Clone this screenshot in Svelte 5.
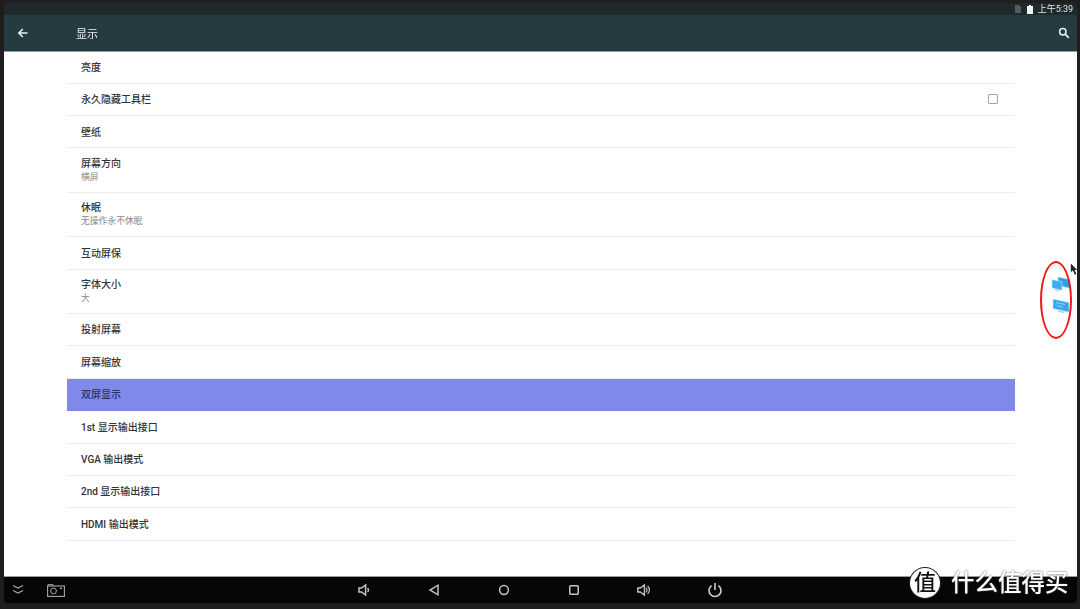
<script lang="ts">
  type Row = { title: string; sub?: string; check?: boolean; active?: boolean };
  const rows: Row[] = [
    { title: '亮度' },
    { title: '永久隐藏工具栏', check: true },
    { title: '壁纸' },
    { title: '屏幕方向', sub: '横屏' },
    { title: '休眠', sub: '无操作永不休眠' },
    { title: '互动屏保' },
    { title: '字体大小', sub: '大' },
    { title: '投射屏幕' },
    { title: '屏幕缩放' },
    { title: '双屏显示', active: true },
    { title: '1st 显示输出接口' },
    { title: 'VGA 输出模式' },
    { title: '2nd 显示输出接口' },
    { title: 'HDMI 输出模式' }
  ];
</script>

<div class="frame">
  <div class="screen">
    <div class="status">
      <svg class="sim" viewBox="0 0 6 8"><path d="M0 0h4l2 2v6H0z" fill="#555c5e" /></svg>
      <svg class="battery" viewBox="0 0 6 9"><path d="M2 0h2v1h2v8H0V1h2z" fill="#f2f4f4" /></svg>
      <span class="clock">上午5:39</span>
    </div>

    <header class="toolbar">
      <svg class="back" viewBox="0 0 12 12"><path d="M10.5 6H2M5.8 2 1.8 6l4 4" fill="none" stroke="#e8eded" stroke-width="1.6" /></svg>
      <span class="title">显示</span>
      <svg class="search" viewBox="0 0 12 12"><circle cx="4.8" cy="4.8" r="3.2" fill="none" stroke="#e8eded" stroke-width="1.5" /><path d="m7.2 7.2 3.6 3.6" stroke="#e8eded" stroke-width="1.7" /></svg>
    </header>

    <main class="content">
      <ul class="list">
        {#each rows as row}
          <li class="row" class:two={row.sub} class:active={row.active}>
            <div class="texts">
              <span class="name">{row.title}</span>
              {#if row.sub}<span class="sub">{row.sub}</span>{/if}
            </div>
            {#if row.check}<span class="box"></span>{/if}
          </li>
        {/each}
      </ul>
    </main>

    <nav class="navbar">
      <div class="nav-left">
        <svg class="ic chev" viewBox="0 0 14 12"><path d="m2 1.5 5 2.5 5-2.5M2 6.5 7 9l5-2.5" fill="none" stroke="#a5a5a5" stroke-width="1.3" /></svg>
        <svg class="ic cam" viewBox="0 0 18 13"><rect x=".6" y="2" width="16.8" height="10.4" fill="none" stroke="#a8a8a8" stroke-width="1.1" /><path d="M1 2V.7h5V2" fill="none" stroke="#a8a8a8" /><circle cx="6.5" cy="7" r="2.9" fill="none" stroke="#a8a8a8" /><rect x="13" y="3.6" width="2" height="1.4" fill="#a8a8a8" /></svg>
      </div>
      <div class="nav-mid">
        <svg class="ic" viewBox="0 0 14 14"><path d="M2 5h2.6l4-3v10l-4-3H2z" fill="none" stroke="#c4c4c4" stroke-width="1.5" /><path d="M10.6 5a3 3 0 0 1 0 4" fill="none" stroke="#c4c4c4" stroke-width="1.3" /></svg>
        <svg class="ic" viewBox="0 0 14 14"><path d="M11 2.2v9.6L3 7z" fill="none" stroke="#c4c4c4" stroke-width="1.5" /></svg>
        <svg class="ic" viewBox="0 0 14 14"><circle cx="7" cy="7" r="4.4" fill="none" stroke="#c4c4c4" stroke-width="1.5" /></svg>
        <svg class="ic" viewBox="0 0 14 14"><rect x="2.8" y="2.8" width="8.4" height="8.4" rx=".8" fill="none" stroke="#c4c4c4" stroke-width="1.5" /></svg>
        <svg class="ic" viewBox="0 0 14 14"><path d="M.8 5h2.6l4-3v10l-4-3H.8z" fill="none" stroke="#c4c4c4" stroke-width="1.4" /><path d="M9 4.8a3 3 0 0 1 0 4.4M10.6 3a5.4 5.4 0 0 1 0 8" fill="none" stroke="#c4c4c4" stroke-width="1.2" /></svg>
        <svg class="ic power" viewBox="0 0 16 16"><path d="M8 1v7" stroke="#cfcfcf" stroke-width="1.6" /><path d="M4.6 3.6a6 6 0 1 0 6.8 0" fill="none" stroke="#cfcfcf" stroke-width="1.6" /></svg>
      </div>
    </nav>
  </div>

  <!-- things drawn over the screenshot -->
  <svg class="monitors" viewBox="0 0 22 40">
    <path d="m8 1 12 2.6v8.6L8 9.6z" fill="#2f9fe8" stroke="#bfe4fa" stroke-width=".6" />
    <path d="m2 3.5 10 2.3v8.6L2 12z" fill="#3aaef2" stroke="#cfeafb" stroke-width=".6" />
    <path d="m5 13 4 1v1.4l-4-1z" fill="#c3cdd3" />
    <path d="m3 23 16 3.6v9.6L3 32.6z" fill="#35a8f0" stroke="#cfeafb" stroke-width=".6" />
    <path d="m8 34.2 6 1.4v1.6l-6-1.4z" fill="#c3cdd3" />
    <path d="m6 26.5 9 2M7 29.8l6 1.3" stroke="#a9dcfb" stroke-width=".8" />
  </svg>
  <div class="ring"></div>
  <svg class="cursor" viewBox="0 0 10 15"><path d="M1 0v11l2.6-2.4L6 14l2-1-2.4-5H9z" fill="#222" /></svg>

  <div class="mark">
    <span class="mark-badge">值</span>
    <span class="mark-text">什么值得买</span>
  </div>
</div>

<style>
  :global(body) { margin: 0; background: #1e1e1e; }

  .frame {
    position: relative;
    width: 1080px;
    height: 609px;
    overflow: hidden;
    background: #1e1e1e;
    padding: 3px 3px 6px 4px;
    box-sizing: border-box;
    font-family: "Roboto", "Noto Sans CJK SC", sans-serif;
  }
  .screen {
    height: 100%;
    display: flex;
    flex-direction: column;
    border-radius: 4px;
    overflow: hidden;
    filter: blur(0.45px);
  }

  .status {
    height: 12px;
    flex-shrink: 0;
    background: #20292b;
    display: flex;
    align-items: center;
    justify-content: flex-end;
    gap: 5px;
    padding-right: 4px;
  }
  .sim { width: 6px; height: 8px; margin-right: 1px; }
  .battery { width: 6px; height: 9px; }
  .clock { font-size: 9px; color: #e4e8e8; line-height: 12px; }

  .toolbar {
    height: 36px;
    flex-shrink: 0;
    background: #263a42;
    border-bottom: 1px solid #8f9a9e;
    display: flex;
    align-items: center;
    padding: 0 7px 0 13px;
  }
  .back { width: 12px; height: 12px; }
  .title { margin-left: 47px; font-size: 11px; color: #eef2f2; }
  .search { width: 12px; height: 12px; margin-left: auto; }

  .content { flex: 1; background: #fff; min-height: 0; }
  .list { list-style: none; margin: -0.7px 62px 0 63px; padding: 0; }
  .row {
    height: 32.4px;
    box-sizing: border-box;
    border-bottom: 1px solid #eeeeee;
    display: flex;
    align-items: center;
    justify-content: space-between;
    padding: 0 17px 0 14px;
  }
  .row.two { height: 44.4px; }
  .row.active { background: #8089ea; border-bottom-color: #8089ea; }
  .texts { display: flex; flex-direction: column; padding-top: 0.5px; }
  .name { font-size: 10px; line-height: 13px; color: #333; font-weight: 500; }
  .active .name { color: #2c3068; }
  .sub { font-size: 8.8px; line-height: 13px; margin-top: 1px; color: #8a8a8a; }
  .box {
    width: 8px;
    height: 8px;
    border: 1.4px solid #a4a4a4;
    border-radius: 1px;
  }

  .navbar {
    height: 27px;
    flex-shrink: 0;
    background: #060606;
    border-top: 1px solid #9a9a9a;
    box-sizing: border-box;
    display: flex;
    align-items: center;
  }
  .nav-left { display: flex; align-items: center; gap: 22px; padding-left: 7px; }
  .nav-mid {
    display: flex;
    align-items: center;
    gap: 56px;
    margin-left: 292px;
  }
  .ic { width: 14px; height: 14px; flex-shrink: 0; }
  .chev { width: 14px; height: 12px; }
  .cam { width: 18px; height: 13px; }
  .power { width: 16px; height: 16px; }

  .ring {
    position: absolute;
    left: 1040px;
    top: 261px;
    width: 28px;
    height: 74px;
    border: 2px solid #f01818;
    border-radius: 50%;
  }
  .monitors { position: absolute; left: 1050px; top: 276px; width: 22px; height: 40px; filter: blur(0.5px); }
  .cursor { position: absolute; left: 1070px; top: 263px; width: 8px; height: 13px; }

  .mark {
    position: absolute;
    left: 910px;
    top: 568px;
    display: flex;
    align-items: center;
    gap: 11px;
  }
  .mark-badge {
    width: 30px;
    height: 30px;
    border-radius: 50%;
    background: #fff;
    color: #111;
    font-size: 22px;
    font-weight: 500;
    line-height: 30px;
    text-align: center;
    box-shadow: 0 0 0 1px #222;
  }
  .mark-text {
    font-size: 23.5px;
    font-weight: 500;
    line-height: 30px;
    color: #fff;
    text-shadow: 0 0 2px #444;
  }
</style>
